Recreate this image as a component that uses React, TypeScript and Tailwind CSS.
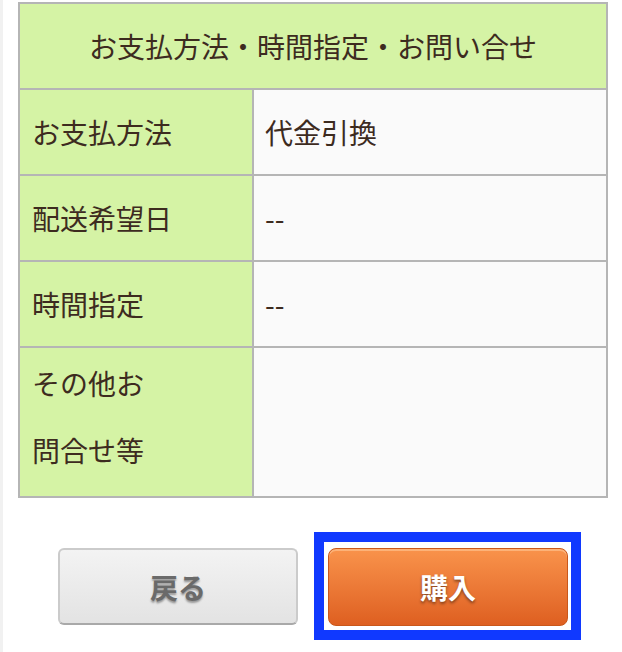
import React from 'react';

const rows: { label: string[]; value: string; tall?: boolean }[] = [
  { label: ['お支払方法'], value: '代金引換' },
  { label: ['配送希望日'], value: '--' },
  { label: ['時間指定'], value: '--' },
  { label: ['その他お', '問合せ等'], value: '', tall: true },
];

export default function App() {
  return (
    <div
      className="min-h-[652px] w-[622px] bg-white border-l-[3px] border-[#f1f1f1] text-[#3d2b1f]"
      style={{ fontFamily: '"Noto Sans CJK JP", "Noto Sans", sans-serif' }}
    >
      <div className="pt-[2px] pl-[15px]">
        <table className="w-[590px] border-collapse border-2 border-[#b5b5b5] text-[28px]">
          <thead>
            <tr>
              <th
                colSpan={2}
                className="h-[86px] border-2 border-[#b5b5b5] bg-[#d5f3a5] text-center font-normal leading-none"
              >
                お支払方法・時間指定・お問い合せ
              </th>
            </tr>
          </thead>
          <tbody>
            {rows.map((r, i) => (
              <tr key={i}>
                <td
                  className={`w-[234px] border-2 border-[#b5b5b5] bg-[#d5f3a5] pl-[12px] ${
                    r.tall ? 'h-[150px] pt-[2px] align-top leading-[67px]' : 'h-[86px] leading-none'
                  }`}
                >
                  {r.label.map((l, j) => (
                    <div key={j}>{l}</div>
                  ))}
                </td>
                <td className="border-2 border-[#b5b5b5] bg-[#fafafa] pl-[11px] leading-none">{r.value}</td>
              </tr>
            ))}
          </tbody>
        </table>
      </div>

      <div className="mt-[34px] flex gap-[16px] pl-[55px]">
        <div className="mt-[16px] flex h-[77px] w-[240px] items-center justify-center rounded-[6px] border-2 border-[#cbcbcb] border-b-[#a9a9a9] bg-linear-to-b from-[#f3f3f3] to-[#e3e3e3] text-[28px] font-bold text-[#6a6a6a] [text-shadow:0_2px_2px_rgba(0,0,0,0.35)]">
          戻る
        </div>
        <div className="border-[10px] border-[#1039ff] bg-white pt-[6px] pl-[4px] pr-[3px] pb-[4px]">
          <div className="flex h-[78px] w-[240px] items-center justify-center rounded-[8px] border border-[#c9571a] bg-linear-to-b from-[#f9934b] to-[#de5f20] text-[28px] font-bold text-white shadow-[inset_0_2px_0_rgba(255,200,150,0.6)] [text-shadow:0_2px_3px_rgba(0,0,0,0.45)]">
            購入
          </div>
        </div>
      </div>
    </div>
  );
}
